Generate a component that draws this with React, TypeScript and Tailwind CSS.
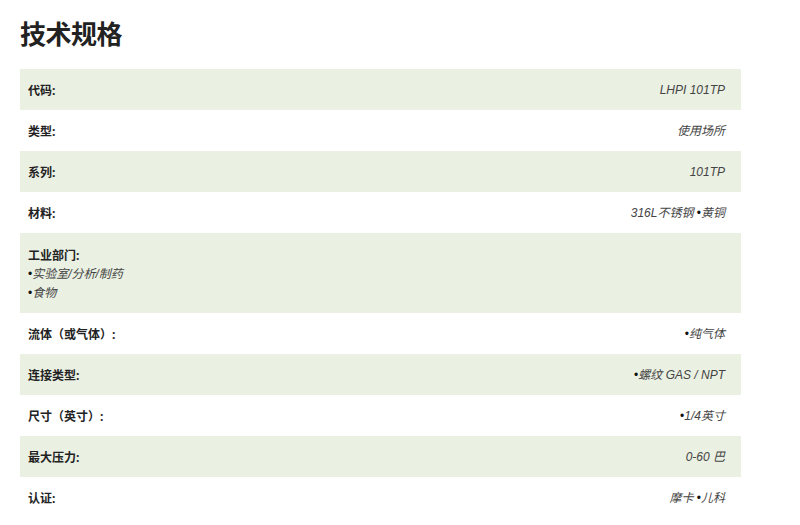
import React from "react";

type Row = { label: string; value?: React.ReactNode; lines?: React.ReactNode[] };

const Dot = () => <span className="not-italic text-[#111]">•</span>;

const rows: Row[] = [
  { label: "代码:", value: "LHPI 101TP" },
  { label: "类型:", value: "使用场所" },
  { label: "系列:", value: "101TP" },
  { label: "材料:", value: <>316L不锈钢 <Dot />黄铜</> },
  {
    label: "工业部门:",
    lines: [
      <><Dot />实验室/分析/制药</>,
      <><Dot />食物</>,
    ],
  },
  { label: "流体（或气体）:", value: <><Dot />纯气体</> },
  { label: "连接类型:", value: <><Dot />螺纹 GAS / NPT</> },
  { label: "尺寸（英寸）:", value: <><Dot />1/4英寸</> },
  { label: "最大压力:", value: "0-60 巴" },
  { label: "认证:", value: <>摩卡 <Dot />儿科</> },
];

const valueFont = { fontFamily: '"Liberation Sans", "Noto Sans CJK SC", sans-serif' };

export default function App() {
  return (
    <div
      className="w-[800px] h-[525px] bg-white overflow-hidden"
      style={{ fontFamily: '"Open Sans", "Noto Sans CJK SC", sans-serif' }}
    >
      <div className="pl-5 pt-[17px]">
        <h1 className="text-[26px] leading-[34px] font-bold text-[#222] tracking-[-0.5px]">技术规格</h1>
      </div>
      <div className="mt-[18px] ml-5 w-[721px]">
        {rows.map((r, i) => (
          <div
            key={i}
            className={`flex items-center justify-between pl-2 pr-4 text-[12px] leading-[19px] ${
              r.lines ? "pt-[13px] pb-[10px]" : "pt-[12px] pb-[10px]"
            } ${i % 2 === 0 ? "bg-[#eaf0e2]" : "bg-white"}`}
          >
            {r.lines ? (
              <div className="flex flex-col">
                <span className="font-bold text-[#222]">{r.label}</span>
                {r.lines.map((l, j) => (
                  <span key={j} className="italic text-[#444]" style={valueFont}>
                    {l}
                  </span>
                ))}
              </div>
            ) : (
              <>
                <span className="font-bold text-[#222]">{r.label}</span>
                <span className="italic text-[#444]" style={valueFont}>
                  {r.value}
                </span>
              </>
            )}
          </div>
        ))}
      </div>
    </div>
  );
}
